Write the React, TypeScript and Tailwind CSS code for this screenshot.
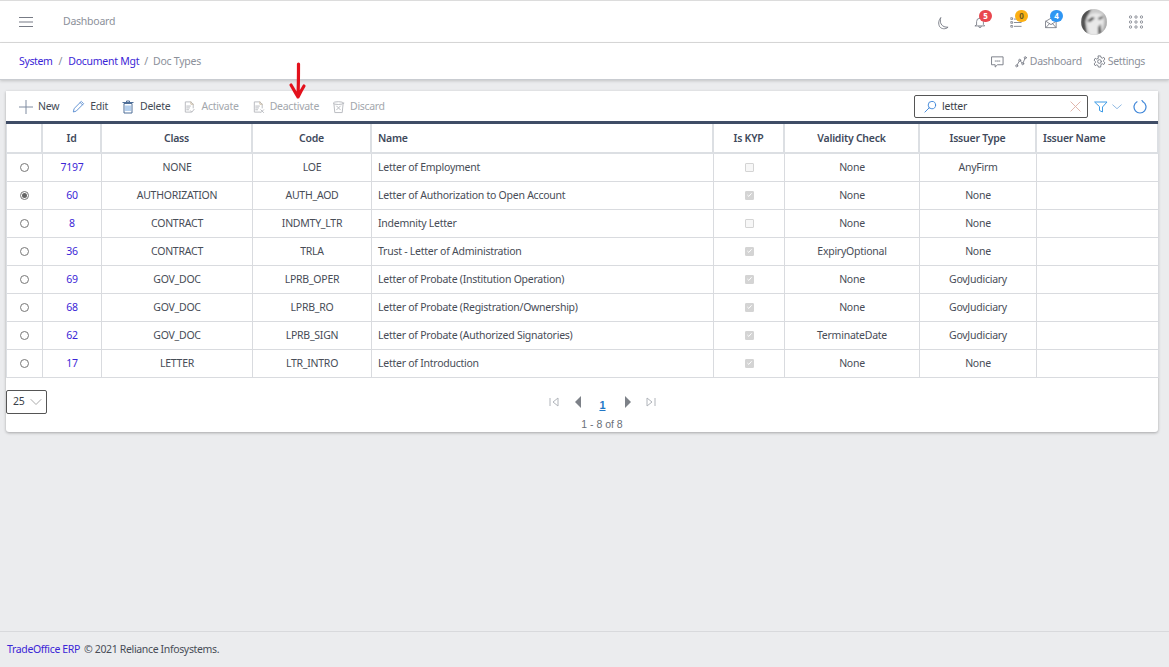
import React from "react";

const rows = [
  ["7197", "NONE", "LOE", "Letter of Employment", false, "None", "AnyFirm", false],
  ["60", "AUTHORIZATION", "AUTH_AOD", "Letter of Authorization to Open Account", true, "None", "None", true],
  ["8", "CONTRACT", "INDMTY_LTR", "Indemnity Letter", false, "None", "None", false],
  ["36", "CONTRACT", "TRLA", "Trust - Letter of Administration", true, "ExpiryOptional", "None", false],
  ["69", "GOV_DOC", "LPRB_OPER", "Letter of Probate (Institution Operation)", true, "None", "GovJudiciary", false],
  ["68", "GOV_DOC", "LPRB_RO", "Letter of Probate (Registration/Ownership)", true, "None", "GovJudiciary", false],
  ["62", "GOV_DOC", "LPRB_SIGN", "Letter of Probate (Authorized Signatories)", true, "TerminateDate", "GovJudiciary", false],
  ["17", "LETTER", "LTR_INTRO", "Letter of Introduction", true, "None", "None", false],
] as const;

type IconProps = { className?: string; children: React.ReactNode };
function Ico({ className, children }: IconProps) {
  return (
    <svg viewBox="0 0 14 14" className={className} fill="none" stroke="currentColor" strokeWidth="1" strokeLinecap="round" strokeLinejoin="round">
      {children}
    </svg>
  );
}

function Badge({ n, color }: { n: number; color: string }) {
  return (
    <span className={`absolute -top-[6px] left-[5px] flex h-[12px] w-[13px] items-center justify-center rounded-full text-[8px] font-bold leading-none tracking-normal ${color}`}>
      {n}
    </span>
  );
}

const DocIcon = ({ mark }: { mark: "check" | "x" }) => (
  <Ico className="h-[14px] w-[13px] text-[#b5b8bd]">
    <path d="M9 12.5H2.5v-11h6l2.5 2.5v4" />
    <path d="M8.5 1.5V4H11" stroke="#c9b9a0" />
    <path d="M4 6h4M4 8h3M4 10h2" />
    {mark === "check" ? <path d="M8 11l1.5 1.5L12 9.5" /> : <path d="M9.5 10l3 3M12.5 10l-3 3" />}
  </Ico>
);

const th = "border-r-2 border-b-[2px] border-[#dcdfe3] font-semibold text-[#3f4a5c] p-0 pt-[1px]";
const td = "border-r border-b border-[#d9dbdf] p-0";

export default function App() {
  return (
    <div className="flex h-[667px] w-[1169px] flex-col overflow-hidden bg-[#ebecee] text-[10.5px] tracking-[-0.25px] text-[#484d57] [font-family:'Noto_Sans',sans-serif]">
      <header className="flex h-[43px] shrink-0 items-center border-y border-[#dcdcdc] bg-white pl-[19px] pr-[26px]">
        <svg viewBox="0 0 14 12" className="h-[12px] w-[14px] text-[#777b85]" stroke="currentColor" strokeWidth="1.2"><path d="M0 1.5h14M0 6h14M0 10.5h14" /></svg>
        <span className="ml-[30px] mt-[1px] text-[#8c909a]">Dashboard</span>
        <div className="ml-auto flex items-center text-[#777b85]">
          <Ico className="mt-[4px] h-[13px] w-[13px]"><path d="M5 1C3 3 2 7 4 10.5c2 2.5 6 3 9 .5-3 0-6-.5-7.5-3.500C4.500 6 4.500 3 5 1z" /></Ico>
          <div className="relative ml-[25px] mt-[2px]">
            <Ico className="block h-[13px] w-[12px]"><path d="M3 9.500V6a4 4 0 0 1 8 0v3.500l1.500 1.500h-11zM5.500 11.500a1.500 1.500 0 0 0 3 0M7 2V1" /></Ico>
            <Badge n={5} color="bg-[#e9474f] text-white" />
          </div>
          <div className="relative ml-[24px] mt-[2px]">
            <Ico className="block h-[13px] w-[12px]"><path d="M1 1.500h2v2H1zM1 6h2v2H1zM1 10.500h2v2H1z" strokeDasharray="1 1" /><path d="M5 7h8M5 11.500h8M5 3h4" /></Ico>
            <Badge n={0} color="bg-[#fbb014] text-[#6b5a20]" />
          </div>
          <div className="relative ml-[23px] mt-[2px]">
            <Ico className="block h-[13px] w-[12px]"><path d="M1 5.500L7 2l6 3.500V13H1zM1 5.500L7 9.500l6-4M1 13l4.500-5M13 13L8.500 8" /></Ico>
            <Badge n={4} color="bg-[#2f96f3] text-white" />
          </div>
          <svg viewBox="0 0 26 26" className="ml-[24px] h-[26px] w-[26px]">
            <defs>
              <clipPath id="av"><circle cx="13" cy="13" r="13" /></clipPath>
              <filter id="bl"><feGaussianBlur stdDeviation="0.8" /></filter>
            </defs>
            <g clipPath="url(#av)">
              <rect width="26" height="26" fill="#c9c9c9" />
              <g filter="url(#bl)">
                <path d="M0 0h10L4 12l2 14H0z" fill="#4f4f4f" />
                <path d="M7 7c5-4 11-4 15 0 2 6 0 13-5 19H9C6 19 5 12 7 7z" fill="#e9e9e9" />
                <path d="M6 12l5-4 3 1-5 4zM17 9l5-2 0 2-4 2z" fill="#333" />
                <path d="M17 18l3-3 0 9-3 2z" fill="#555" />
                <path d="M22 0h4v26h-5c3-8 4-18 1-26z" fill="#a8a8a8" />
              </g>
            </g>
          </svg>
          <svg viewBox="0 0 14 14" className="ml-[22px] h-[14px] w-[14px]" fill="none" stroke="currentColor" strokeWidth="0.8">
            {[1.5, 7, 12.5].flatMap((x) => [2, 7, 12].map((y) => <circle key={`${x}-${y}`} cx={x} cy={y} r="1.2" />))}
          </svg>
        </div>
      </header>

      <div className="flex h-[37px] shrink-0 items-center border-b border-[#c9ccd1] bg-white pl-[19px] pr-[24px] pt-[1px] shadow-[0_1px_3px_rgba(0,0,0,0.18)]">
        <span className="tracking-[-0.35px] text-[#3b26d6]">System</span>
        <span className="mx-[6px] text-[#888c95]">/</span>
        <span className="text-[#3b26d6]">Document Mgt</span>
        <span className="mx-[5px] text-[#888c95]">/</span>
        <span className="text-[#8c909a]">Doc Types</span>
        <div className="ml-auto flex items-center text-[#8c909a]">
          <Ico className="h-[13px] w-[13px] text-[#777b85]"><path d="M1 2h12v8.500H7L4.500 13v-2.500H1z" /><path d="M4.500 6.500h5" strokeDasharray="1 1" /></Ico>
          <Ico className="ml-[11px] h-[12px] w-[12px] text-[#777b85]"><circle cx="2" cy="11.500" r="1.200" /><circle cx="5.500" cy="5" r="1.200" /><circle cx="9" cy="9" r="1.200" /><circle cx="12" cy="2" r="1.200" /><path d="M2.500 10.500L5 6M6.500 6L8.200 8.200M9.500 8L11.500 3" /></Ico>
          <span className="ml-[3px]">Dashboard</span>
          <Ico className="ml-[11px] h-[13px] w-[13px] text-[#777b85]"><path d="M5.800 1h2.400l.4 1.700 1.500.7 1.500-.9 1.200 1.900-1.300 1.200v1.600l1.300 1.200-1.200 1.900-1.500-.9-1.500.7L8.200 13H5.800l-.4-1.700-1.500-.7-1.500.9-1.200-1.900 1.300-1.200V6.800L1.200 5.600l1.200-2.100 1.500.9 1.500-.7z" /><circle cx="7" cy="7" r="2" /></Ico>
          <span className="ml-[2px] tracking-[-0.35px]">Settings</span>
        </div>
      </div>

      <main className="relative flex-1 px-[6px] pt-[11px]">
        <svg viewBox="0 0 20 38" className="absolute left-[288px] -top-[18px] h-[38px] w-[20px]" fill="none" stroke="#e3111c" strokeWidth="3.200" strokeLinecap="round" strokeLinejoin="round">
          <path d="M10.500 2c0 10 0 20-.5 33M3 23c2.500 4 4.500 8 7 12 2-4 3.500-7 6-11" />
        </svg>
        <section className="w-[1152px] rounded-b-[3px] bg-white shadow-[0_1px_3px_rgba(0,0,0,0.3)]">
          <div className="flex h-[30px] items-center pl-[13px] pr-[11px] pt-[1px]">
            <div className="flex items-center gap-[5px] text-[#444a55]">
              <svg viewBox="0 0 14 14" className="h-[14px] w-[14px] text-[#7f8ba0]" stroke="currentColor" strokeWidth="1"><path d="M7 0v14M0 7h14" /></svg>
              <span>New</span>
            </div>
            <div className="ml-[13px] flex items-center gap-[5px] text-[#444a55]">
              <Ico className="h-[13px] w-[13px] text-[#5b8ed0]"><path d="M1.500 12.500l.8-3.300L10 1.500l2.500 2.500-7.700 7.700zM8.800 2.700l2.500 2.500" /></Ico>
              <span>Edit</span>
            </div>
            <div className="ml-[14px] flex items-center gap-[6px] text-[#444a55]">
              <svg viewBox="0 0 12 14" className="h-[14px] w-[12px] text-[#4f6f98]" fill="none" stroke="currentColor"><path d="M2 3.500h8v9.500H2zM.5 2.500h11M4.500 2.500V1h3v1.500" /><path d="M4 5.500v5.500M6 5.500v5.500M8 5.500v5.500" stroke="#6aa0dc" /></svg>
              <span>Delete</span>
            </div>
            <div className="ml-[13px] flex items-center gap-[5px] text-[#a3a7ad]">
              <DocIcon mark="check" />
              <span>Activate</span>
            </div>
            <div className="ml-[13px] flex items-center gap-[5px] text-[#a3a7ad]">
              <DocIcon mark="x" />
              <span>Deactivate</span>
            </div>
            <div className="ml-[13px] flex items-center gap-[5px] text-[#a3a7ad]">
              <Ico className="h-[14px] w-[13px] text-[#b5b8bd]"><path d="M2 3l1 10h8l1-10" /><ellipse cx="7" cy="2.800" rx="5.500" ry="1.500" /><path d="M5 6l4 4M9 6l-4 4" /></Ico>
              <span className="tracking-[-0.35px]">Discard</span>
            </div>
            <div className="ml-auto flex h-[23px] w-[174px] items-center rounded-[2px] border border-[#555] pl-[9px] pr-[5px]">
              <Ico className="h-[13px] w-[13px] text-[#3d85d8]"><circle cx="8.500" cy="5.500" r="4" /><path d="M5.500 8.500L1 13" /></Ico>
              <span className="ml-[5px] text-[#3a3f48]">letter</span>
              <Ico className="ml-auto h-[13px] w-[13px] text-[#dfb0a6]"><path d="M2 2l10 10M12 2L2 12" /></Ico>
            </div>
            <Ico className="ml-[6px] h-[14px] w-[14px] text-[#3d9be6]"><path d="M1 2h12L8.500 7v5l-3-1.500V7z" /></Ico>
            <Ico className="ml-[3px] h-[12px] w-[12px] text-[#7fb0e0]"><path d="M2 4.500L7 9l5-4.500" /></Ico>
            <Ico className="ml-[10px] h-[14px] w-[14px] text-[#3d85d8]"><path d="M4 1.800A6 6 0 1 0 10 1.800M10 1.800L9 .5" strokeWidth="1.200" /></Ico>
          </div>
          <div className="h-[3px] bg-[#3f4d66]" />
          <table className="w-[1152px] table-fixed border-separate border-spacing-0 border-l border-[#dcdfe3]">
            <colgroup>
              <col className="w-[36px]" /><col className="w-[59px]" /><col className="w-[151px]" /><col className="w-[119px]" /><col className="w-[342px]" /><col className="w-[71px]" /><col className="w-[135px]" /><col className="w-[117px]" /><col className="w-[122px]" />
            </colgroup>
            <thead>
              <tr className="h-[30px]">
                <th className={th} />
                <th className={th}>Id</th>
                <th className={th}>Class</th>
                <th className={th}>Code</th>
                <th className={`${th} pl-[6px] text-left`}>Name</th>
                <th className={th}>Is KYP</th>
                <th className={th}>Validity Check</th>
                <th className={th}>Issuer Type</th>
                <th className={`${th} pl-[6px] text-left`}>Issuer Name</th>
              </tr>
            </thead>
            <tbody>
              {rows.map((r) => (
                <tr key={r[0]} className="h-[28px] text-center">
                  <td className={td}>
                    <span className="mx-auto -mt-[1px] flex h-[9px] w-[9px] items-center justify-center rounded-full border border-[#777]">
                      {r[7] && <span className="h-[5px] w-[5px] rounded-full bg-[#666]" />}
                    </span>
                  </td>
                  <td className={`${td} text-[#3b26d6]`}>{r[0]}</td>
                  <td className={td}>{r[1]}</td>
                  <td className={td}>{r[2]}</td>
                  <td className={`${td} pl-[6px] text-left`}>{r[3]}</td>
                  <td className={td}>
                    <span className={`mx-auto -mt-[1px] flex h-[9px] w-[9px] items-center justify-center rounded-[1px] border ${r[4] ? "border-[#d4d4d4] bg-[#d4d4d4]" : "border-[#d4d4d4] bg-[#f7f7f7]"}`}>
                      {r[4] && (
                        <svg viewBox="0 0 10 10" className="h-[8px] w-[8px]" fill="none" stroke="#fff" strokeWidth="1.400"><path d="M2 5l2 2 4-4.500" /></svg>
                      )}
                    </span>
                  </td>
                  <td className={td}>{r[5]}</td>
                  <td className={td}>{r[6]}</td>
                  <td className={td} />
                </tr>
              ))}
            </tbody>
          </table>
          <div className="flex h-[54px]">
            <div className="mt-[12px] flex h-[24px] w-[41px] items-center justify-between rounded-[2px] border border-[#555] pl-[6px] pr-[3px] text-[#3a3f48]">
              25
              <Ico className="h-[14px] w-[14px] text-[#aaa]"><path d="M2 4.500L7 9.500l5-5" /></Ico>
            </div>
            <div className="ml-[474px] flex w-[162px] flex-col items-center pt-[17px] tracking-normal [font-family:'Liberation_Sans',sans-serif]">
              <div className="flex h-[14px] items-center">
                <svg viewBox="0 0 12 12" className="h-[12px] w-[12px]" fill="none" stroke="#b0b4ba"><path d="M2 2v8M10 2L5 6l5 4z" /></svg>
                <svg viewBox="0 0 12 12" className="ml-[12px] h-[12px] w-[12px]" fill="#7d8188"><path d="M9 0v12L3 6z" /></svg>
                <span className="ml-[15px] mr-[15px] mt-[7px] w-[8px] text-center text-[11px] font-bold text-[#1f78c8] underline">1</span>
                <svg viewBox="0 0 12 12" className="h-[12px] w-[12px]" fill="#7d8188"><path d="M3 0v12l6-6z" /></svg>
                <svg viewBox="0 0 12 12" className="ml-[11px] h-[12px] w-[12px]" fill="none" stroke="#b0b4ba"><path d="M10 2v8M2 2l5 4-5 4z" /></svg>
              </div>
              <span className="mt-[8px] text-[10.5px] text-[#6a6f78]">1 - 8 of 8</span>
            </div>
          </div>
        </section>
      </main>

      <footer className="flex h-[36px] shrink-0 items-center border-t border-[#d8d9dc] pl-[7px] tracking-[-0.35px] text-[#484d57]">
        <span className="text-[#3b26d6]">TradeOffice ERP</span>
        <span className="ml-[4px]">© 2021 Reliance Infosystems.</span>
      </footer>
    </div>
  );
}
